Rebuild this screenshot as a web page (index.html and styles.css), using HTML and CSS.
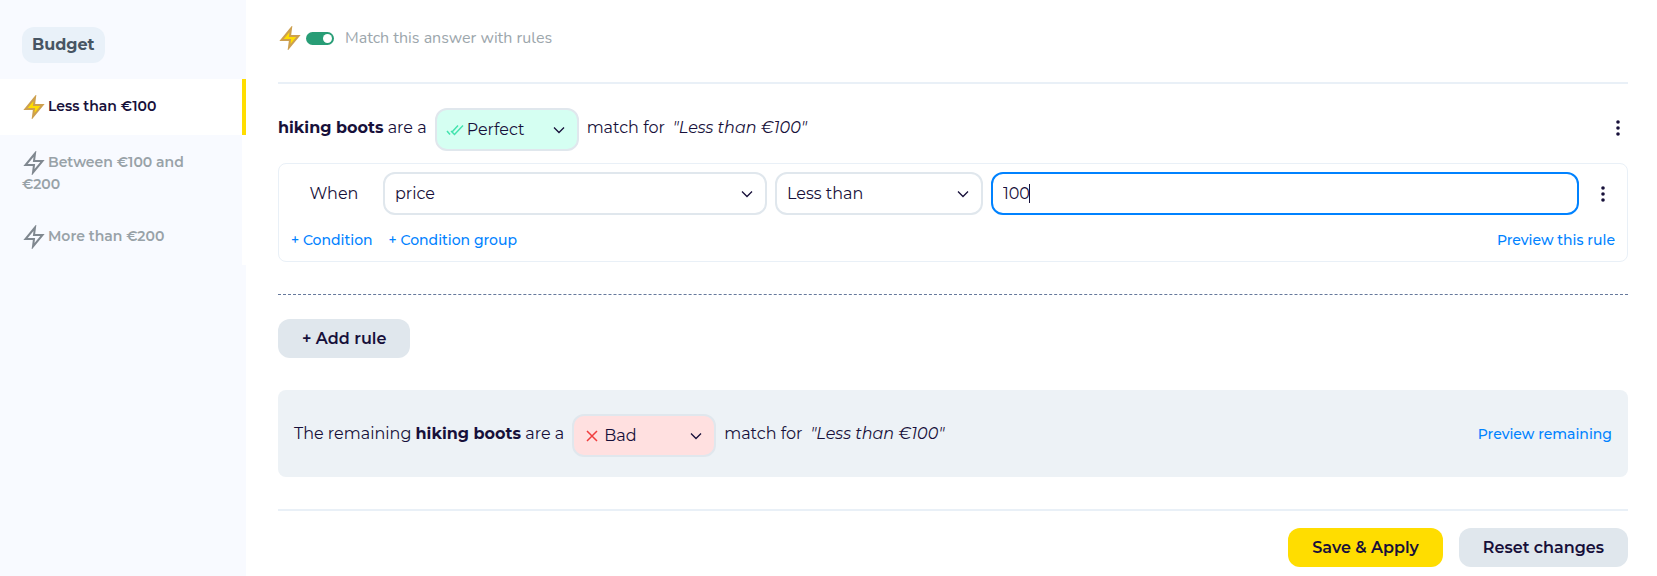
FILE: index.html
```
<!DOCTYPE html>
<html lang="en">
<head>
    <meta charset="UTF-8">
    <meta name="viewport" content="width=device-width, initial-scale=1.0">
    <title>Budget rules</title>
    <link rel="stylesheet" href="styles.css">
</head>
<body>
    <!-- Shared icons -->
    <svg class="sprite" aria-hidden="true">
        <symbol id="bolt" viewBox="0 0 24 24">
            <polygon points="13 2.5 3.5 14 12 14 11 21.5 20.5 10 12 10"/>
        </symbol>
        <symbol id="chevron" viewBox="0 0 12 8">
            <path d="M1 1.5L6 6.5L11 1.5"/>
        </symbol>
        <symbol id="dots" viewBox="0 0 4 18">
            <circle cx="2" cy="3" r="1.8"/>
            <circle cx="2" cy="9" r="1.8"/>
            <circle cx="2" cy="15" r="1.8"/>
        </symbol>
    </svg>

    <div class="layout">
        <nav class="sidebar">
            <h2 class="question">Budget</h2>
            <a href="#" class="answer active"><svg class="bolt"><use href="#bolt"/></svg>Less than €100</a>
            <a href="#" class="answer"><svg class="bolt"><use href="#bolt"/></svg>Between €100 and €200</a>
            <a href="#" class="answer"><svg class="bolt"><use href="#bolt"/></svg>More than €200</a>
        </nav>

        <main class="content">
            <div class="toggle-row">
                <svg class="bolt gold"><use href="#bolt"/></svg>
                <input type="checkbox" id="matchRules" class="switch" checked>
                <label for="matchRules">Match this answer with rules</label>
            </div>

            <div class="sentence">
                <label for="ruleMatch"><strong>hiking boots</strong> are a</label>
                <div class="select match perfect">
                    <svg class="match-icon" viewBox="0 0 18 12"><path d="M5 7L8.5 10.5L17 1.5M1 7L4 10.5M12 1.5L6.5 7.5"/></svg>
                    <select id="ruleMatch">
                        <option>Perfect</option>
                        <option>Good</option>
                        <option>Bad</option>
                    </select>
                    <svg class="chevron"><use href="#chevron"/></svg>
                </div>
                <span>match for</span>
                <em>"Less than €100"</em>
                <button type="button" class="menu" aria-label="Rule menu"><svg><use href="#dots"/></svg></button>
            </div>

            <section class="rule">
                <div class="condition">
                    <label for="field" class="when">When</label>
                    <div class="fields">
                        <div class="select">
                            <select id="field">
                                <option>price</option>
                            </select>
                            <svg class="chevron"><use href="#chevron"/></svg>
                        </div>
                        <div class="select">
                            <select aria-label="Operator">
                                <option>Less than</option>
                                <option>More than</option>
                            </select>
                            <svg class="chevron"><use href="#chevron"/></svg>
                        </div>
                        <div class="value-box">
                            <input type="text" class="value" aria-label="Value" value="100">
                        </div>
                    </div>
                    <button type="button" class="menu" aria-label="Condition menu"><svg><use href="#dots"/></svg></button>
                </div>
                <div class="rule-links">
                    <a href="#">+ Condition</a>
                    <a href="#">+ Condition group</a>
                    <a href="#" class="push">Preview this rule</a>
                </div>
            </section>

            <hr class="dashed">

            <button type="button" class="btn">+ Add rule</button>

            <section class="sentence remaining">
                <label for="restMatch">The remaining <strong>hiking boots</strong> are a</label>
                <div class="select match bad">
                    <svg class="match-icon" viewBox="0 0 12 12"><path d="M1 1L11 11M11 1L1 11"/></svg>
                    <select id="restMatch">
                        <option>Bad</option>
                        <option>Good</option>
                        <option>Perfect</option>
                    </select>
                    <svg class="chevron"><use href="#chevron"/></svg>
                </div>
                <span>match for</span>
                <em>"Less than €100"</em>
                <a href="#" class="push">Preview remaining</a>
            </section>

            <div class="actions">
                <button type="button" class="btn primary">Save &amp; Apply</button>
                <button type="button" class="btn">Reset changes</button>
            </div>
        </main>
    </div>

    <script>
        // Start with the cursor after the value
        const value = document.querySelector('.value');
        value.focus();
        value.setSelectionRange(value.value.length, value.value.length);
    </script>
</body>
</html>
```
FILE: styles.css
```
* {
    margin: 0;
    padding: 0;
    box-sizing: border-box;
}

body {
    font-family: Montserrat, Inter, sans-serif;
    font-size: 16px;
    line-height: 20px;
    color: #17103a;
    background-color: #fff;
}

button,
input,
select {
    font: inherit;
    color: inherit;
}

a {
    color: #0082ff;
    font-size: 14px;
    font-weight: 500;
    text-decoration: none;
}

.sprite {
    display: none;
}

.layout {
    display: flex;
    min-height: 100vh;
}

/* Sidebar */
.sidebar {
    width: 246px;
    flex-shrink: 0;
    padding-top: 27px;
    background-color: #f8faff;
}

.question {
    width: fit-content;
    margin: 0 0 16px 22px;
    padding: 8px 10px;
    border-radius: 12px;
    background-color: #e9f1f9;
    color: #475563;
    font-size: 16px;
    font-weight: 700;
    line-height: 20px;
}

.answer {
    display: block;
    padding: 16px 40px 16px 22px;
    border-right: 4px solid #fff;
    color: #98a2a8;
    font-weight: 600;
    line-height: 18px;
}

.answer.active {
    background-color: #fff;
    border-right-color: #ffdd00;
    color: #17103a;
}

.bolt {
    width: 24px;
    height: 24px;
    vertical-align: middle;
    fill: none;
    stroke: #808890;
    stroke-width: 2;
}

.answer .bolt {
    margin-right: 2px;
}

.active .bolt,
.bolt.gold {
    fill: #ffdd00;
    stroke: #cda04f;
}

/* Main column */
.content {
    flex: 1;
    padding: 26px 29px 9px 32px;
}

.toggle-row {
    display: flex;
    align-items: center;
    padding-bottom: 32px;
    border-bottom: 2px solid #e9f0f7;
    color: #9ca6ac;
    font-family: Nunito, "Open Sans", sans-serif;
}

.toggle-row label {
    margin-left: 11px;
}

.switch {
    appearance: none;
    display: flex;
    justify-content: flex-end;
    width: 28px;
    height: 13px;
    margin-left: 4px;
    padding: 2px;
    border-radius: 7px;
    background-color: #289d76;
}

.switch::before {
    content: "";
    width: 9px;
    height: 9px;
    border-radius: 50%;
    background-color: #fff;
}

.switch:not(:checked) {
    justify-content: flex-start;
    background-color: #9ca6ac;
}

.sentence {
    display: flex;
    align-items: center;
    gap: 8px;
    margin-top: 21px;
}

.push,
.sentence .menu {
    margin-left: auto;
}

.sentence .menu {
    width: 20px;
}

/* Dropdowns */
.select {
    position: relative;
}

.select select,
.value {
    width: 100%;
    height: 43px;
    padding: 0 10px;
    border: 2px solid #e0e7ed;
    border-radius: 12px;
    background-color: #fff;
    appearance: none;
    outline: none;
}

/* Thin cursor that stays visible while the field has focus */
.value-box {
    position: relative;
}

.value {
    caret-color: transparent;
}

.value:focus {
    border-color: #0082ff;
}

.value-box:focus-within::after {
    content: "";
    position: absolute;
    left: 38px;
    top: 12px;
    width: 1px;
    height: 19px;
    background-color: #17103a;
}

.chevron {
    position: absolute;
    right: 14px;
    top: 18px;
    width: 12px;
    height: 8px;
    fill: none;
    stroke: #17103a;
    stroke-width: 1.3;
    pointer-events: none;
}

.match {
    width: 144px;
    margin-top: 3px;
}

.match select {
    padding-left: 30px;
}

.match-icon {
    position: absolute;
    left: 11px;
    top: 16px;
    width: 18px;
    height: 12px;
    fill: none;
    stroke-width: 1.5;
}

.perfect select {
    background-color: #d5fff2;
}

.perfect .match-icon {
    stroke: #43e3ae;
}

.bad select {
    background-color: #ffe0e0;
}

.bad .match-icon {
    stroke: #f03e3e;
}

/* Three dot menu */
.menu {
    display: flex;
    align-items: center;
    justify-content: center;
    width: 24px;
    height: 24px;
    border: none;
    background: none;
    cursor: pointer;
}

.menu svg {
    width: 4px;
    height: 18px;
    fill: #17103a;
}

/* Rule card */
.rule {
    margin-top: 12px;
    padding: 8px 12px 11px;
    border: 1px solid #e9f0f7;
    border-radius: 8px;
}

.condition {
    display: flex;
    align-items: center;
    gap: 12px;
}

.when {
    width: 80px;
    padding-left: 6px;
    text-align: center;
}

.fields {
    display: grid;
    grid-template-columns: 96fr 52fr 147fr;
    gap: 8px;
    flex: 1;
}

.rule-links {
    display: flex;
    gap: 16px;
    margin-top: 15px;
}

.dashed {
    margin: 32px 0 24px;
    border: none;
    border-top: 1px dashed #66799c;
}

.remaining {
    margin-top: 32px;
    padding: 21px 16px 20px;
    border-radius: 8px;
    background-color: #edf2f6;
}

/* Buttons */
.btn {
    height: 39px;
    padding: 0 24px;
    border: none;
    border-radius: 12px;
    background-color: #e0e7ed;
    font-weight: 600;
    cursor: pointer;
}

.primary {
    background-color: #ffdd00;
}

.actions {
    display: flex;
    justify-content: flex-end;
    gap: 16px;
    margin-top: 32px;
    padding-top: 17px;
    border-top: 2px solid #e9f0f7;
}
```
